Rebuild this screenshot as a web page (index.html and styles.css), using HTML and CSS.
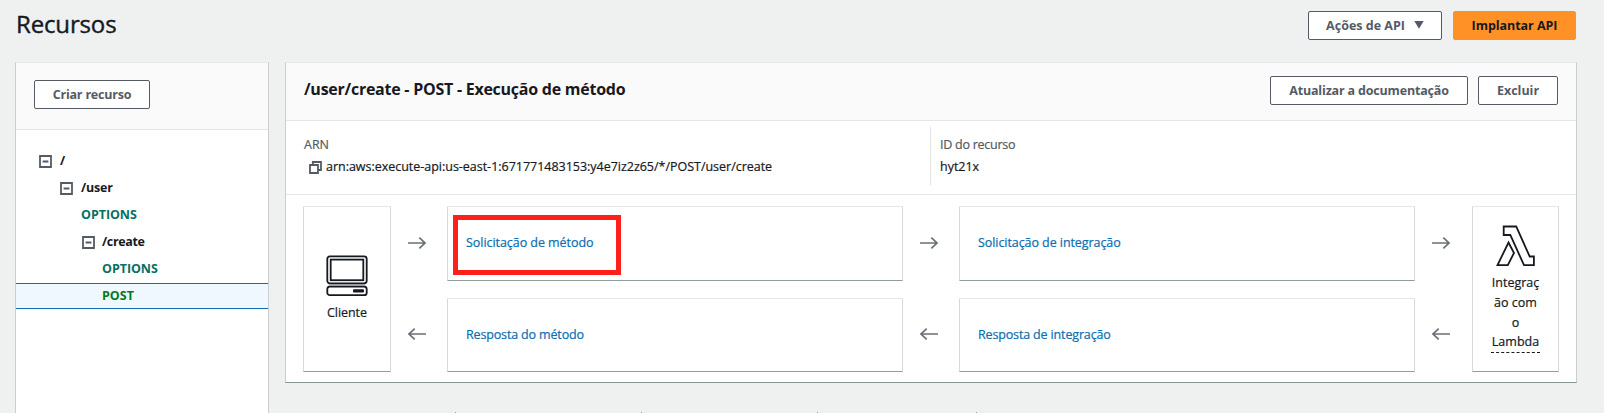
FILE: index.html
```html
<!DOCTYPE html>
<html lang="pt-BR">
<head>
<meta charset="utf-8">
<title>Recursos</title>
<link rel="stylesheet" href="styles.css">
</head>
<body>
<svg class="defs" width="0" height="0" aria-hidden="true">
  <symbol id="minus-box" viewBox="0 0 13 13"><path d="M1 1h11v11H1zM3.6 6.5h5.8" fill="none" stroke="#545b64" stroke-width="1.8"/></symbol>
  <symbol id="arrow" viewBox="0 0 18 12"><path d="M0 6h17M11.3.7 17 6l-5.7 5.3" fill="none" stroke="#687078" stroke-width="1.7"/></symbol>
</svg>
<header class="page-header">
  <h1>Recursos</h1>
  <div class="actions">
    <button class="btn btn-menu">Ações de API <svg width="10" height="8" viewBox="0 0 10 8"><path d="M.3 0h9.4L5 7.8z" fill="#545b64"/></svg></button>
    <button class="btn btn-primary">Implantar API</button>
  </div>
</header>
<main class="layout">
  <aside class="sidebar">
    <div class="sidebar-head"><button class="btn btn-create">Criar recurso</button></div>
    <ul class="tree">
      <li class="level-0"><svg class="toggle"><use href="#minus-box"/></svg><span>/</span></li>
      <li class="level-1"><svg class="toggle"><use href="#minus-box"/></svg><span class="user">/user</span></li>
      <li class="level-2 options"><span>OPTIONS</span></li>
      <li class="level-2 parent"><svg class="toggle"><use href="#minus-box"/></svg><span class="create">/create</span></li>
      <li class="level-3 options"><span>OPTIONS</span></li>
      <li class="level-3 post selected">POST</li>
    </ul>
  </aside>
  <div class="content">
    <section class="panel">
      <div class="panel-head">
        <h2>/user/create - POST - Execução de método</h2>
        <div class="actions">
          <button class="btn btn-docs">Atualizar a documentação</button>
          <button class="btn btn-delete">Excluir</button>
        </div>
      </div>
      <dl class="info">
        <div class="arn"><dt>ARN</dt><dd><svg class="copy" width="13" height="13" viewBox="0 0 13 13"><path d="M1 4h8v8H1zM3.8 4V1H12v8H9" fill="none" stroke="#545b64" stroke-width="1.8"/></svg>arn:aws:execute-api:us-east-1:671771483153:y4e7iz2z65/*/POST/user/create</dd></div>
        <div class="resource-id"><dt>ID do recurso</dt><dd>hyt21x</dd></div>
      </dl>
      <div class="flow">
        <div class="card endpoint client">
          <svg width="42" height="42" viewBox="0 0 42 42" fill="none" stroke="#16191f" stroke-width="1.8"><path d="M2.5 28h37v4h-37z" fill="#c9c9cb" stroke="none"/><rect x="1.3" y="1.3" width="39.4" height="27" rx="2.5" fill="#fff"/><rect x="4.7" y="4.6" width="32.6" height="20.6"/><rect x="1.3" y="31.6" width="39.4" height="8.6" rx="2.5" fill="#fff"/><rect x="27" y="34.2" width="11" height="3.4" rx="1" fill="#16191f" stroke="none"/></svg>
          <span>Cliente</span>
        </div>
        <div class="arrows"><svg><use href="#arrow"/></svg><svg class="back"><use href="#arrow"/></svg></div>
        <div class="steps">
          <div class="card step"><a class="link-mr">Solicitação de método</a><div class="highlight"></div></div>
          <div class="card step"><a class="link-mresp">Resposta do método</a></div>
        </div>
        <div class="arrows"><svg><use href="#arrow"/></svg><svg class="back"><use href="#arrow"/></svg></div>
        <div class="steps">
          <div class="card step"><a class="link-ir">Solicitação de integração</a></div>
          <div class="card step"><a class="link-iresp">Resposta de integração</a></div>
        </div>
        <div class="arrows last"><svg><use href="#arrow"/></svg><svg class="back"><use href="#arrow"/></svg></div>
        <div class="card endpoint lambda">
          <svg width="40" height="42" viewBox="0 0 40 42" fill="none" stroke="#16191f" stroke-width="1.8"><path d="M7.7 1.5h12.5L33.7 31.5h4.2v8.6H28L14.3 10H7.7zM12.5 17.5 18 28l-6.2 12.1H1.5z"/></svg>
          <span>Integraç<br>ão com<br>o</span><span class="dashed">Lambda</span>
        </div>
      </div>
    </section>
    <div class="tabs"><i></i><i></i><i></i><i></i></div>
  </div>
</main>
</body>
</html>
```
FILE: styles.css
```css
* { box-sizing: border-box; }
html { overflow: hidden; }
body {
  margin: 0;
  height: 413px;
  overflow: hidden;
  background: #eff1f1;
  color: #16191f;
  font: 12.5px/20px "Open Sans", "Noto Sans", sans-serif;
  -webkit-text-stroke: .2px;
}
svg { display: block; flex: none; }
.defs { position: absolute; }
h1, h2, ul, dl, dd { margin: 0; padding: 0; }

.page-header {
  display: flex;
  justify-content: space-between;
  height: 62px;
  padding: 11px 28px 0 16px;
}
h1 { font-size: 24px; line-height: 25px; font-weight: 400; letter-spacing: -.15px; -webkit-text-stroke: .4px; }
.actions { display: flex; gap: 11px; }
.btn {
  display: flex;
  align-items: center;
  justify-content: center;
  height: 29px;
  padding: 0 0 1px;
  border: 1px solid #545b64;
  border-radius: 2px;
  background: #fff;
  color: #545b64;
  font: bold 12.5px/20px "Open Sans", "Noto Sans", sans-serif;
  white-space: nowrap;
  -webkit-text-stroke: 0;
}
.page-header .btn { padding: 1px 0 0; }
.btn-menu { width: 134px; gap: 9px; }
.btn-menu svg { margin-bottom: 2px; }
.btn-primary { width: 123px; border-color: #ff9126; background: #ff9126; color: #16191f; letter-spacing: -.05px; }
.btn-create { width: 116px; letter-spacing: -.2px; }
.btn-docs { width: 198px; letter-spacing: -.17px; }
.panel-head .btn, .btn-create { padding: 0; }
.btn-delete { width: 80px; }

.layout { display: flex; align-items: flex-start; gap: 16px; padding-left: 15px; }
.sidebar { width: 254px; height: 351px; border: 1px solid #c9cfcf; border-top-color: #e4e8e8; border-bottom: 0; background: #fff; }
.sidebar-head { height: 67px; padding: 17px 18px; border-bottom: 1px solid #e4e6e6; background: #fafafa; }
.tree { padding-top: 18px; list-style: none; font-weight: 700; -webkit-text-stroke: 0; }
.tree li { display: flex; align-items: center; gap: 8px; height: 27px; }
.tree li span { padding-bottom: 2px; }
.toggle { width: 13px; height: 13px; }
.level-0 { padding-left: 23px; }
.level-1 { padding-left: 44px; }
.level-2 { padding-left: 65px; }
.tree .parent { gap: 7px; padding-left: 66px; }
.level-3 { padding-left: 86px; }
.user { letter-spacing: -.2px; }
.create { letter-spacing: -.34px; }
.options { color: #067062; letter-spacing: -.05px; }
.post { color: #067a1c; }
.tree .selected { height: 26px; border: solid #0a6eb4; border-width: 1px 0; background: #eef8fe; }

.content { width: 1292px; }
.panel { height: 321px; border: 1px solid #c9cfcf; border-top-color: #e4e8e8; border-bottom-color: #879596; background: #fff; }
.panel-head { display: flex; justify-content: space-between; height: 58px; padding: 13px 18px 0; border-bottom: 1px solid #e4e6e6; background: #fafafa; }
.panel-head .actions { gap: 10px; }
h2 { font-size: 16px; line-height: 26px; letter-spacing: -.25px; -webkit-text-stroke: 0; }
.info { display: flex; height: 74px; padding: 6px 18px 0; border-bottom: 1px solid #e4e8e8; }
.arn { width: 627px; height: 58px; padding-top: 7px; border-right: 1px solid #e1e4e4; }
.resource-id { padding: 7px 0 0 9px; }
dt { color: #545b64; line-height: 22px; }
.resource-id dt { letter-spacing: -.25px; }
dd { display: flex; align-items: center; line-height: 22px; letter-spacing: -.02px; }
.copy { margin: 1px 4px 0 5px; }

.flow { display: flex; height: 188px; padding: 11px 17px 0; }
.card { border: 1px solid #d5dadb; border-top-color: #e4e8e8; border-bottom-color: #8f9e9b; border-radius: 1px; background: #fff; }
.endpoint { display: flex; flex-direction: column; align-items: center; width: 88px; height: 166px; text-align: center; }
.client { padding-top: 48px; gap: 6px; letter-spacing: -.05px; }
.lambda { width: 87px; padding-top: 18px; line-height: 20px; }
.lambda svg { margin-bottom: 6px; }
.dashed { width: 49px; height: 20px; line-height: 18px; border-bottom: 1px dashed #16191f; }
.arrows { display: flex; flex-direction: column; gap: 79px; width: 56px; padding: 31px 0 0 17px; }
.last { width: 57px; }
.arrows svg { width: 18px; height: 12px; }
.back { transform: scaleX(-1); }
.steps { display: flex; flex-direction: column; gap: 17px; width: 456px; }
.step { position: relative; display: flex; align-items: center; height: 75px; padding: 0 0 2px 18px; color: #0a6eb4; }
.step + .step { height: 74px; padding-bottom: 1px; }
.link-mr { letter-spacing: -.05px; }
.link-ir { letter-spacing: -.07px; }
.link-mresp { letter-spacing: -.15px; }
.link-iresp { letter-spacing: -.15px; }
.highlight { position: absolute; left: 5px; top: 8px; width: 168px; height: 60px; border: 5px solid #ff1f1b; }

.tabs { display: grid; grid-template-columns: 186px 176px 159px 1px; padding: 29px 0 0 170px; }
.tabs i { width: 1px; height: 2px; background: #8f9999; }
```
